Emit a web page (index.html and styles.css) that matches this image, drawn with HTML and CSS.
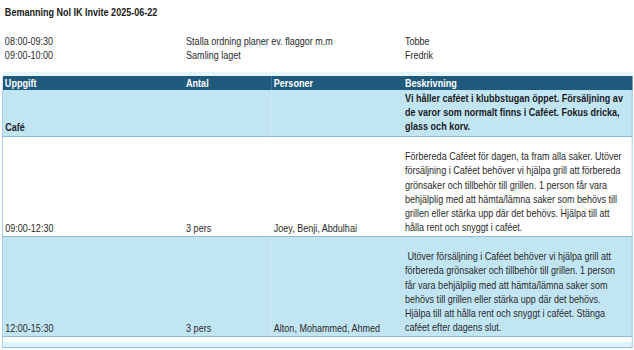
FILE: index.html
```html
<!DOCTYPE html>
<html lang="sv">
<head>
<meta charset="utf-8">
<title>Bemanning Nol IK Invite 2025-06-22</title>
<link rel="stylesheet" href="styles.css">
</head>
<body>
<div class="frame">
<table class="sheet">
  <colgroup>
    <col class="c1"><col class="c2"><col class="c3"><col class="c4">
  </colgroup>
  <tr class="r-title"><td colspan="4" class="title">Bemanning Nol IK Invite 2025-06-22</td></tr>
  <tr class="r-blank"><td colspan="4"></td></tr>
  <tr class="r-sched"><td>08:00-09:30</td><td colspan="2">Stalla ordning planer ev. flaggor m.m</td><td>Tobbe</td></tr>
  <tr class="r-sched2"><td>09:00-10:00</td><td colspan="2">Samling laget</td><td>Fredrik</td></tr>
  <tr class="r-blank2"><td colspan="4"></td></tr>
  <tr class="r-band"><td colspan="4"></td></tr>
  <tr class="r-head"><th>Uppgift</th><th>Antal</th><th>Personer</th><th>Beskrivning</th></tr>
  <tr class="r-data r-cafe shade">
    <td class="strong">Café</td><td></td><td></td>
    <td class="desc strong">Vi håller caféet i klubbstugan öppet. Försäljning av de varor som normalt finns i Caféet. Fokus dricka, glass och korv.</td>
  </tr>
  <tr class="r-data r-big">
    <td>09:00-12:30</td><td>3 pers</td><td>Joey, Benji, Abdulhai</td>
    <td class="desc">Förbereda Caféet för dagen, ta fram alla saker. Utöver försäljning i Caféet behöver vi hjälpa grill att förbereda grönsaker och tillbehör till grillen. 1 person får vara behjälplig med att hämta/lämna saker som behövs till grillen eller stärka upp där det behövs. Hjälpa till att hålla rent och snyggt i caféet.</td>
  </tr>
  <tr class="r-data r-big2 shade">
    <td>12:00-15:30</td><td>3 pers</td><td>Alton, Mohammed, Ahmed</td>
    <td class="desc">&nbsp;Utöver försäljning i Caféet behöver vi hjälpa grill att förbereda grönsaker och tillbehör till grillen. 1 person får vara behjälplig med att hämta/lämna saker som behövs till grillen eller stärka upp där det behövs. Hjälpa till att hålla rent och snyggt i caféet. Stänga caféet efter dagens slut.</td>
  </tr>
  <tr class="r-data r-gap"><td></td><td></td><td></td><td></td></tr>
  <tr class="r-data r-tail"><td></td><td></td><td></td><td></td></tr>
</table>
</div>
</body>
</html>
```
FILE: styles.css
```css
html, body {
  margin: 0;
  padding: 0;
  background: #ffffff;
  overflow: hidden;
}

body {
  font-family: "Liberation Sans", Arial, sans-serif;
  font-size: 11px;
  color: #2a2a2a;
}

.frame {
  width: 634px;
  height: 350px;
  overflow: hidden;
}

/* Narrow spreadsheet look: Arial Narrow is Arial at ~82% width */
.sheet {
  border-collapse: collapse;
  table-layout: fixed;
  width: 768px;
  margin: 5px 0 0 2px;
  transform: scaleX(0.82);
  transform-origin: 0 0;
}

.c1 { width: 221px; }
.c2 { width: 107px; }
.c3 { width: 160px; }
.c4 { width: 280px; }

.sheet td,
.sheet th {
  padding: 0 3px 0 3px;
  line-height: 14px;
  vertical-align: bottom;
  text-align: left;
  white-space: nowrap;
  overflow: visible;
}

.sheet .desc {
  white-space: normal;
  line-height: 14.2px;
  padding-right: 7px;
}

.title {
  font-weight: bold;
  color: #1a1a1a;
}

.r-title { height: 14px; }
.r-blank { height: 15px; }
.r-sched { height: 14px; }
.r-sched2 { height: 13px; }
.r-blank2 { height: 10px; }
.r-band { height: 4px; }
.r-band td { background: #e2f6fb; }

.r-head { height: 14px; }
.r-head th {
  background: #1f5a7d;
  color: #ffffff;
  font-weight: bold;
  line-height: 13px;
}

.r-data td {
  border-bottom: 1px solid #8dbbe0;
}
.r-data td:first-child { border-left: 1px solid #9cc4e6; }
.r-data td:last-child { border-right: 1px solid #9cc4e6; }

.shade td { background: #c2e5f4; }

.strong {
  font-weight: bold;
  color: #1b1b24;
}

.r-cafe { height: 46px; }
.r-cafe td { padding-bottom: 2px; }
.r-big { height: 100px; }
.r-big td { padding-bottom: 1px; }
.r-big2 { height: 100px; }
.r-big2 td { padding-bottom: 1px; }

.r-gap { height: 6px; }
.r-gap td { border-bottom: none; }
.r-tail { height: 5px; }
.r-tail td { background: #dcf4fb; }
```
